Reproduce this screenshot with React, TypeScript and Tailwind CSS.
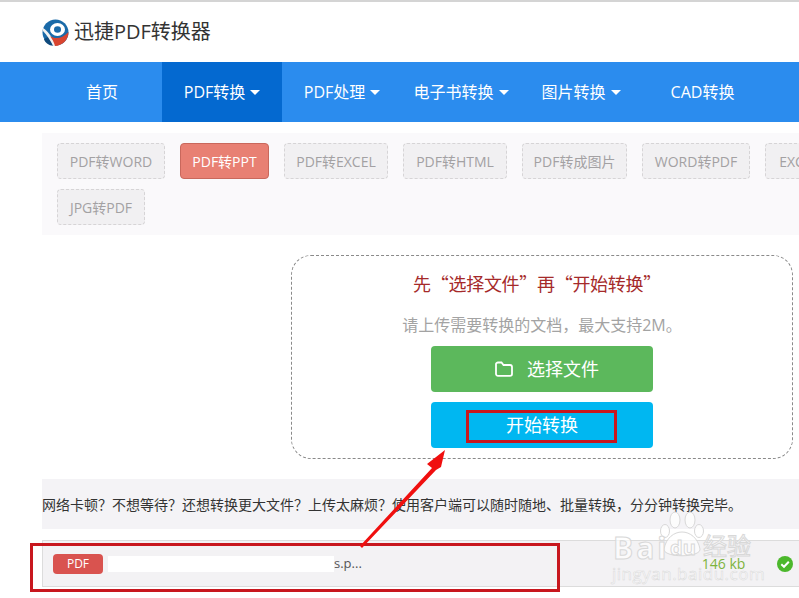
import React from "react";

const font = "font-['Open_Sans','Noto_Sans_CJK_SC',sans-serif]";

const navItems = [
  { label: "首页", w: "w-[120px]" },
  { label: "PDF转换", w: "w-[120px]", caret: true, active: true },
  { label: "PDF处理", w: "w-[120px]", caret: true },
  { label: "电子书转换", w: "w-[118px]", caret: true },
  { label: "图片转换", w: "w-[122px]", caret: true },
  { label: "CAD转换", w: "w-[121px]" },
];

const tabs = [
  { label: "PDF转WORD", w: "w-[108px]" },
  { label: "PDF转PPT", w: "w-[89px]", active: true },
  { label: "PDF转EXCEL", w: "w-[104px]" },
  { label: "PDF转HTML", w: "w-[104px]" },
  { label: "PDF转成图片", w: "w-[105px]" },
  { label: "WORD转PDF", w: "w-[108px]" },
  { label: "EXCEL转PDF", w: "w-[108px]" },
  { label: "JPG转PDF", w: "w-[88px]" },
];

const Logo = () => (
  <svg width="27" height="27" viewBox="0 0 27 27" className="shrink-0">
    <circle cx="13.5" cy="13.5" r="13" fill="#1a6aa8" />
    <path d="M2 20 C3 24 7 26.500 11 26.800 L8 17 Z" fill="#0f4a7c" />
    <path d="M1 9 C6 12 11 19 14 27 L11 26.800 C8 21 5 16 1 12 Z" fill="#f2f2f2" />
    <path d="M8 17 C14 21 21 19 26.500 13 C26.500 21 20 27 13 26.900 C12 23 10 20 8 17 Z" fill="#d9452f" />
    <ellipse cx="15.500" cy="10.500" rx="7.500" ry="6.500" fill="#fff" />
    <ellipse cx="15.500" cy="10.500" rx="3.500" ry="3.200" fill="#1a6aa8" />
  </svg>
);

const Caret = () => (
  <span className="ml-[5px] inline-block border-x-[5px] border-t-[5px] border-x-transparent border-t-white" />
);

const App = () => {
  return (
    <div className={`relative h-[598px] w-[799px] overflow-hidden bg-white ${font}`}>
      <header className="flex h-[62px] items-center border-t-2 border-[#d4d4d4] pl-[42px]">
        <Logo />
        <span className="ml-[5px] text-[20px] text-[#333]">迅捷PDF转换器</span>
      </header>

      <nav className="flex h-[60px] bg-[#2b8cee] pl-[42px] text-[16px] text-white">
        {navItems.map((item) => (
          <div
            key={item.label}
            className={`flex h-full items-center justify-center ${item.w} ${item.active ? "bg-[#0469d0]" : ""}`}
          >
            {item.label}
            {item.caret && <Caret />}
          </div>
        ))}
      </nav>

      <main className="w-[860px] pl-[42px]">
        <div className="mt-[11px] flex h-[102px] w-[850px] flex-wrap content-start gap-x-[15px] gap-y-[10px] bg-[#faf9fb] px-[15px] pt-[10px]">
          {tabs.map((tab) => (
            <div
              key={tab.label}
              className={`flex h-[36px] items-center justify-center rounded text-[14px] ${tab.w} ${
                tab.active
                  ? "border border-[#c9685c] bg-[#e88073] text-white"
                  : "border border-dashed border-[#d6d4d6] bg-[#f1f0f2] text-[#a3a1a3]"
              }`}
            >
              {tab.label}
            </div>
          ))}
        </div>

        <section className="ml-[249px] mt-[20px] flex h-[204px] w-[502px] flex-col items-center rounded-[20px] border border-dashed border-[#8a8a8a] pt-[15px]">
          <h2 className="-ml-[10px] font-['Noto_Sans_CJK_SC',sans-serif] text-[18px] leading-[24px] tracking-[-0.3px] text-[#a52a2a]">
            先“选择文件”再“开始转换”
          </h2>
          <p className="mt-[20px] text-[16px] leading-[20px] text-[#a3a3a3]">请上传需要转换的文档，最大支持2M。</p>
          <button className="mt-[11px] flex h-[46px] w-[222px] items-center justify-center rounded bg-[#5cb85c] pl-[10px] text-[18px] text-white">
            <svg width="18" height="16" viewBox="0 0 18 16" fill="none" stroke="currentColor" strokeWidth="1.8" className="mr-[14px]">
              <path d="M1 13 V3 C1 2 2 1.500 3 1.500 H6.500 L8.500 4 H15 C16 4 17 4.800 17 6 V13 C17 14 16 14.800 15 14.800 H3 C2 14.800 1 14 1 13 Z" />
            </svg>
            选择文件
          </button>
          <button className="mt-[10px] flex h-[46px] w-[222px] items-center justify-center rounded bg-[#00b7f1] text-[18px] text-white">
            开始转换
          </button>
        </section>

        <div className="mt-[20px] flex h-[50px] w-[800px] items-center bg-[#f4f3f6] text-[14px] text-[#333]">
          网络卡顿？不想等待？还想转换更大文件？上传太麻烦？使用客户端可以随时随地、批量转换，分分钟转换完毕。
        </div>

        <div className="mt-[11px] flex h-[47px] w-[800px] items-center border border-[#dcdcdc] bg-[#f3f2f4] pl-[10px] text-[13px] text-[#555]">
          <span className="flex h-[20px] w-[50px] items-center justify-center rounded-sm bg-[#d9534f] text-[12px] text-white">PDF</span>
          <span className="ml-[5px] h-[16px] w-[226px] bg-white" />
          <span>s.p...</span>
          <span className="ml-[340px] text-[14px] text-[#7db33c]">146 kb</span>
          <svg width="16" height="16" viewBox="0 0 16 16" className="ml-[32px]">
            <circle cx="8" cy="8" r="8" fill="#4cb82c" />
            <path d="M4.300 8.300 L7 10.800 L11.800 5.800" fill="none" stroke="#fff" strokeWidth="2" />
          </svg>
        </div>
      </main>

      {/* annotations drawn over the page */}
      <div className="absolute left-[466px] top-[410px] h-[33px] w-[151px] border-[3px] border-[#c8171e]" />
      <div className="absolute left-[30px] top-[543px] h-[49px] w-[530px] border-[3px] border-[#c8171e]" />
      <svg width="110" height="110" viewBox="0 0 110 110" className="absolute left-[350px] top-[445px]">
        <path d="M10 101 L82 23 L77 19 L95 5 L91 22 L86 25 L12 103 Z" fill="#f00f0f" />
      </svg>

      {/* baidu watermark */}
      <div className="absolute left-[610px] top-[510px] h-[88px] w-[189px] text-white/70">
        <svg width="46" height="48" viewBox="0 0 46 48" className="absolute left-[49px] top-[1px]" fill="#ffffff" fillOpacity="0.7" stroke="#d8d8d8">
          <ellipse cx="16" cy="9" rx="5" ry="8" />
          <ellipse cx="31" cy="9" rx="5" ry="8" />
          <ellipse cx="6" cy="20" rx="4.500" ry="6.500" />
          <ellipse cx="40" cy="20" rx="4.500" ry="6.500" />
          <path d="M5 38 C7 27 15 21 23 21 C31 21 39 27 41 38 C42 47 4 47 5 38 Z" />
        </svg>
        <span className="absolute left-[3px] top-[20px] text-[30px] font-bold leading-[36px] tracking-[3px] [-webkit-text-stroke:1px_#d8d8d8]">Bai</span>
        <span className="absolute left-[60px] top-[25px] text-[20px] font-bold leading-[26px] [-webkit-text-stroke:1px_#d8d8d8]">du</span>
        <span className="absolute left-[93px] top-[21px] text-[24px] leading-[30px] [-webkit-text-stroke:1px_#d8d8d8]">经验</span>
        <span className="absolute left-[2px] top-[52px] text-[17px] leading-[24px] tracking-[0.5px] [-webkit-text-stroke:0.5px_#d8d8d8]">jingyan.baidu.com</span>
      </div>
    </div>
  );
};

export default App;
